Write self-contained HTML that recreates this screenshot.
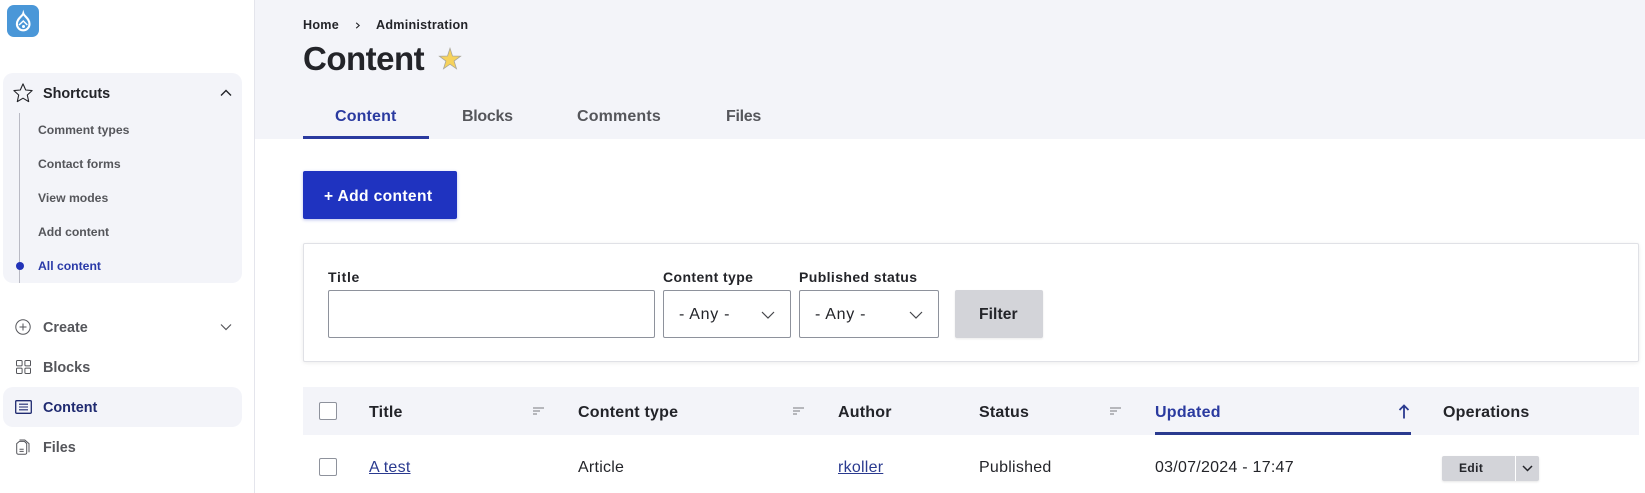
<!DOCTYPE html>
<html lang="en"><head><meta charset="utf-8"><title>Content</title>
<style>
html,body{margin:0;padding:0;background:#fff}
body{position:relative;width:1645px;height:493px;overflow:hidden;font-family:"Liberation Sans",Arial,sans-serif;color:#232429}
.a{position:absolute}
.t{position:absolute;white-space:nowrap;line-height:20px;height:20px;transform:translateY(-10px)}
svg{position:absolute;overflow:visible}
.side{font-size:14.4px;font-weight:700;color:#55565b}
.sub{font-size:12.2px;font-weight:700;color:#55565b}
.tab{font-size:16px;font-weight:700;color:#55565b;letter-spacing:.1px}
.lab{font-size:14px;font-weight:700;color:#232429;letter-spacing:.4px}
.th{font-size:16px;font-weight:700;color:#232429;letter-spacing:.2px}
.td{font-size:16px;color:#232429;letter-spacing:.25px}
.lnk{color:#2a3a8f;text-decoration:underline}
.box{position:absolute;background:#fff;border:1px solid #8e929c;border-radius:2px;box-sizing:border-box}
.sel{font-size:16px;color:#232429;letter-spacing:.7px}
</style></head><body>

<!-- sidebar -->
<div class="a" style="left:254px;top:0;width:1px;height:493px;background:#e4e5ec"></div>
<div class="a" style="left:7px;top:5px;width:32px;height:32px;border-radius:7px;background:#4a97d8"></div>
<svg style="left:7px;top:5px" width="32" height="32" viewBox="0 0 32 32"><path d="M16.300 8.500C17 11 22.500 13.500 22.500 19a6.300 6.300 0 0 1-12.600 0C9.900 13.500 15.600 11 16.300 8.500Z" fill="none" stroke="#fff" stroke-width="2.100"/><path d="M12 20l4.300-4 4 4" fill="none" stroke="#fff" stroke-width="1.500"/><circle cx="16.500" cy="21.500" r="1.500" fill="#fff"/></svg>

<div class="a" style="left:3px;top:73px;width:239px;height:210px;border-radius:10px;background:#f3f4f9"></div>
<svg style="left:13px;top:83px" width="20" height="20" viewBox="0 0 20 20"><path d="M10 .9l2.700 6.100 6.400.6-4.800 4.400 1.400 6.600L10 15.200l-5.700 3.400 1.400-6.600L.9 7.600l6.400-.6Z" fill="none" stroke="#232429" stroke-width="1.100" stroke-linejoin="round"/></svg>
<div class="t side" style="left:43px;top:93.500px;color:#232429">Shortcuts</div>
<svg style="left:220px;top:89px" width="12" height="8" viewBox="0 0 12 8"><path d="M1 6.500L6 1.500l5 5" fill="none" stroke="#232429" stroke-width="1.400"/></svg>
<div class="a" style="left:19px;top:113px;width:1px;height:170px;background:#b9bac4"></div>
<div class="t sub" style="left:38px;top:130px">Comment types</div>
<div class="t sub" style="left:38px;top:164px">Contact forms</div>
<div class="t sub" style="left:38px;top:198px">View modes</div>
<div class="t sub" style="left:38px;top:232px">Add content</div>
<div class="t sub" style="left:38px;top:266px;color:#2a3aa8">All content</div>
<div class="a" style="left:16px;top:262px;width:8px;height:8px;border-radius:50%;background:#2233b8"></div>

<svg style="left:15px;top:319px" width="16" height="16" viewBox="0 0 16 16"><circle cx="8" cy="8" r="7.200" fill="none" stroke="#55565b" stroke-width="1"/><path d="M8 4.500v7M4.500 8h7" stroke="#55565b" stroke-width="1"/></svg>
<div class="t side" style="left:43px;top:327.500px">Create</div>
<svg style="left:220px;top:323px" width="12" height="8" viewBox="0 0 12 8"><path d="M1 1.500l5 5 5-5" fill="none" stroke="#55565b" stroke-width="1.200"/></svg>

<svg style="left:16px;top:360px" width="15" height="14" viewBox="0 0 15 14"><g fill="none" stroke="#55565b" stroke-width="1"><rect x=".5" y=".5" width="5.600" height="5.400" rx="1"/><rect x="8.900" y=".5" width="5.600" height="5.400" rx="1"/><rect x=".5" y="8.100" width="5.600" height="5.400" rx="1"/><rect x="8.900" y="8.100" width="5.600" height="5.400" rx="1"/></g></svg>
<div class="t side" style="left:43px;top:367.500px">Blocks</div>

<div class="a" style="left:3px;top:387px;width:239px;height:40px;border-radius:10px;background:#f3f4f9"></div>
<svg style="left:15px;top:400px" width="17" height="14" viewBox="0 0 17 14"><rect x=".7" y=".7" width="15.600" height="12.600" rx="1" fill="none" stroke="#1f2a70" stroke-width="1.300"/><path d="M4 4.200h9M4 7h9M4 9.800h9" stroke="#1f2a70" stroke-width="1.100"/></svg>
<div class="t side" style="left:43px;top:407.500px;color:#1f2a70">Content</div>

<svg style="left:16px;top:439px" width="14" height="16" viewBox="0 0 14 16"><g fill="none" stroke="#55565b" stroke-width="1"><path d="M3.500 1h5.300l4.200 3.600v8.600"/><path d="M.7 4.600L3.400 2.400h5l2.300 2.200v9.200a1.400 1.400 0 0 1-1.400 1.400H2.100A1.400 1.400 0 0 1 .7 13.800Z"/><path d="M3.500 10.300h4.200M3.500 12.400h4.200"/></g></svg>
<div class="t side" style="left:43px;top:447.500px">Files</div>

<!-- header -->
<div class="a" style="left:255px;top:0;width:1390px;height:139px;background:#f3f4f9"></div>
<div class="t" style="left:303px;top:25px;font-size:12.600px;font-weight:700;letter-spacing:.25px">Home</div>
<svg style="left:355px;top:22px" width="6" height="7" viewBox="0 0 6 7"><path d="M1.200.8l3 2.700-3 2.700" fill="none" stroke="#232429" stroke-width="1.100"/></svg>
<div class="t" style="left:376px;top:25px;font-size:12.600px;font-weight:700;letter-spacing:.25px">Administration</div>
<div class="t" style="left:303px;top:59px;font-size:33px;font-weight:700;letter-spacing:-.5px;line-height:40px;height:40px;transform:translateY(-20px)">Content</div>
<svg style="left:438px;top:47px" width="24" height="24" viewBox="0 0 24 24"><path d="M12 1.300l2.500 7.700 8.100.2-6.500 4.800 2.400 7.800L12 17.200l-6.500 4.600 2.400-7.800-6.500-4.800 8.100-.2Z" fill="#f6d25c" stroke="#a9a69a" stroke-width=".8"/></svg>

<div class="t tab" style="left:335px;top:117px;color:#2a3aa0;letter-spacing:.15px">Content</div>
<div class="a" style="left:303px;top:136px;width:126px;height:3px;background:#2a3a9f"></div>
<div class="t tab" style="left:462px;top:117px;letter-spacing:-.3px">Blocks</div>
<div class="t tab" style="left:577px;top:117px;letter-spacing:.15px">Comments</div>
<div class="t tab" style="left:726px;top:117px;letter-spacing:-.3px">Files</div>

<!-- add button -->
<div class="a" style="left:303px;top:171px;width:154px;height:48px;border-radius:2px;background:#1f33c0;box-shadow:0 1px 3px rgba(31,51,192,.3)"></div>
<div class="t" style="left:324px;top:196.500px;font-size:15.600px;font-weight:700;color:#fff;letter-spacing:.35px">+ Add content</div>

<!-- filter card -->
<div class="a" style="left:303px;top:243px;width:1336px;height:119px;background:#fff;border:1px solid #e0e1e6;box-sizing:border-box;border-radius:2px;box-shadow:0 1px 4px rgba(0,0,0,.08)"></div>
<div class="t lab" style="left:328px;top:277px;letter-spacing:.7px">Title</div>
<div class="t lab" style="left:663px;top:277px">Content type</div>
<div class="t lab" style="left:799px;top:277px">Published status</div>
<div class="box" style="left:328px;top:290px;width:327px;height:48px"></div>
<div class="box" style="left:663px;top:290px;width:128px;height:48px"></div>
<div class="t sel" style="left:679px;top:315px">- Any -</div>
<svg style="left:761px;top:311px" width="14" height="9" viewBox="0 0 14 9"><path d="M1 1l6 6 6-6" fill="none" stroke="#45464b" stroke-width="1.200"/></svg>
<div class="box" style="left:799px;top:290px;width:140px;height:48px"></div>
<div class="t sel" style="left:815px;top:315px">- Any -</div>
<svg style="left:909px;top:311px" width="14" height="9" viewBox="0 0 14 9"><path d="M1 1l6 6 6-6" fill="none" stroke="#45464b" stroke-width="1.200"/></svg>
<div class="a" style="left:955px;top:290px;width:88px;height:48px;border-radius:2px;background:#d3d4d9;box-shadow:0 1px 2px rgba(0,0,0,.08)"></div>
<div class="t" style="left:979px;top:315px;font-size:15.600px;font-weight:700;color:#232429;letter-spacing:.1px">Filter</div>

<!-- table -->
<div class="a" style="left:303px;top:387px;width:1336px;height:48px;background:#f3f4f9"></div>
<div class="box" style="left:319px;top:402px;width:18px;height:18px"></div>
<div class="t th" style="left:369px;top:412.500px">Title</div>
<svg style="left:533px;top:407px" width="11" height="8" viewBox="0 0 11 8"><path d="M0 1h11M0 4h7M0 7h4" stroke="#919297" stroke-width="1.200"/></svg>
<div class="t th" style="left:578px;top:412.500px">Content type</div>
<svg style="left:793px;top:407px" width="11" height="8" viewBox="0 0 11 8"><path d="M0 1h11M0 4h7M0 7h4" stroke="#919297" stroke-width="1.200"/></svg>
<div class="t th" style="left:838px;top:412.500px">Author</div>
<div class="t th" style="left:979px;top:412.500px">Status</div>
<svg style="left:1110px;top:407px" width="11" height="8" viewBox="0 0 11 8"><path d="M0 1h11M0 4h7M0 7h4" stroke="#919297" stroke-width="1.200"/></svg>
<div class="t th" style="left:1155px;top:412.500px;color:#2a3a9f;letter-spacing:.25px">Updated</div>
<svg style="left:1398px;top:404px" width="12" height="15" viewBox="0 0 12 15"><path d="M6 14.500V1.500M1.500 6L6 1.500 10.500 6" fill="none" stroke="#2a3a8f" stroke-width="1.800"/></svg>
<div class="a" style="left:1155px;top:432px;width:256px;height:3px;background:#2a3a8f"></div>
<div class="t th" style="left:1443px;top:412.500px">Operations</div>

<div class="box" style="left:319px;top:458px;width:18px;height:18px"></div>
<div class="t td" style="left:369px;top:468px"><span class="lnk">A test</span></div>
<div class="t td" style="left:578px;top:468px">Article</div>
<div class="t td" style="left:838px;top:468px"><span class="lnk">rkoller</span></div>
<div class="t td" style="left:979px;top:468px">Published</div>
<div class="t td" style="left:1155px;top:468px">03/07/2024 - 17:47</div>
<div class="a" style="left:1442px;top:456px;width:97px;height:25px;border-radius:2px;background:#d3d4d9;box-shadow:0 1px 2px rgba(0,0,0,.1)"></div>
<div class="a" style="left:1515px;top:456px;width:1px;height:25px;background:#fff"></div>
<div class="t" style="left:1459px;top:468px;font-size:12px;font-weight:700;color:#232429;letter-spacing:.4px">Edit</div>
<svg style="left:1522px;top:465px" width="11" height="7" viewBox="0 0 11 7"><path d="M1 1l4.500 4.500L10 1" fill="none" stroke="#232429" stroke-width="1.500"/></svg>
</body></html>
